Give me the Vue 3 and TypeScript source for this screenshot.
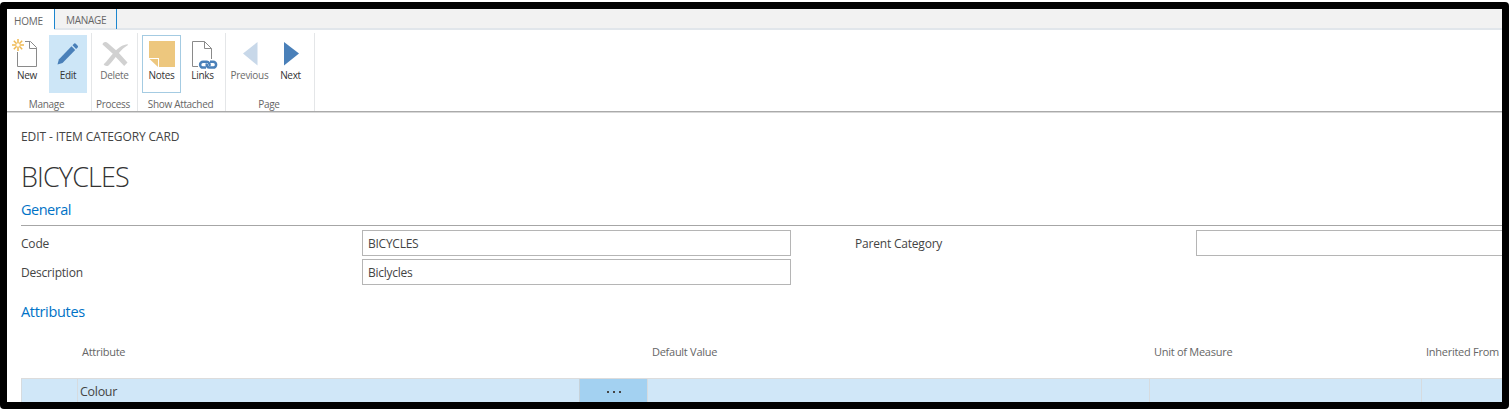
<script setup lang="ts">
interface Action { id: string; label: string; state?: string }
interface Group { name: string; cls: string; actions: Action[] }

const groups: Group[] = [
  { name: 'Manage', cls: 'g-manage', actions: [{ id: 'new', label: 'New' }, { id: 'edit', label: 'Edit', state: 'active' }] },
  { name: 'Process', cls: 'g-process', actions: [{ id: 'delete', label: 'Delete', state: 'disabled' }] },
  { name: 'Show Attached', cls: 'g-show', actions: [{ id: 'notes', label: 'Notes', state: 'outlined' }, { id: 'links', label: 'Links' }] },
  { name: 'Page', cls: 'g-page', actions: [{ id: 'previous', label: 'Previous', state: 'disabled' }, { id: 'next', label: 'Next' }] },
]
const headers: string[] = ['', 'Attribute', 'Default Value', 'Unit of Measure', 'Inherited From']
</script>

<template>
  <div class="frame">
    <div class="window">
      <nav class="tabs">
        <span class="tab home"><span>HOME</span></span>
        <span class="tab manage"><span>MANAGE</span></span>
      </nav>
      <div class="ribbon">
        <section v-for="g in groups" :key="g.name" class="group" :class="g.cls">
          <div class="actions">
            <button v-for="a in g.actions" :key="a.id" class="action" :class="[a.id, a.state]">
              <svg class="icon" width="38" height="34" viewBox="0 0 38 34">
                <g v-if="a.id === 'new'" fill="none">
                  <path d="M9.5 17V31.5H28.5V12.5L22.5 6.5H17" stroke="#8a8a8a" />
                  <path d="M21.5 6.5V13.5H28.5" stroke="#8a8a8a" />
                  <path d="M10 4V7.5M10 12.500V16M4 10H7.500M12.500 10H16M5.800 5.800L8.200 8.200M11.800 11.800L14.200 14.200M5.800 14.200L8.200 11.800M11.800 8.200L14.200 5.800" stroke="#efb952" stroke-width="1.5" />
                  <circle cx="10" cy="10" r="2.300" stroke="#efb952" stroke-width="1" />
                </g>
                <g v-else-if="a.id === 'edit'" fill="#4a80b9">
                  <path d="M8.500 29.500L9.800 24.500L22.500 11.300L26.200 15L13.500 27.900Z" />
                  <path d="M23.500 10.300L25.200 8.600Q26 8 26.800 8.800L28.700 10.700Q29.400 11.600 28.700 12.400L27.100 14Z" />
                </g>
                <g v-else-if="a.id === 'delete'" fill="#d1d1d1">
                  <path d="M6.500 9.500C6.800 7 9.800 6.200 12 8.200L20 15.300C23 12.500 27 9.500 31.700 9.200L32 10C28.500 12 25.500 14.800 22.900 18L31.500 27.500L28.200 31L19.700 22C17 25.500 14.800 28.500 12.500 30.500C10.500 31.600 8.500 30.800 7.700 29.300C10.800 26.500 13.600 22.500 16.800 18.800Z" />
                </g>
                <g v-else-if="a.id === 'notes'">
                  <path d="M6 6H32V32H16V23H6Z" fill="#edc77e" />
                  <path d="M6.500 24H15V32Z" fill="#edc77e" />
                </g>
                <g v-else-if="a.id === 'links'" fill="none">
                  <path d="M14 31.500H8.500V6.500H20.500L27.500 13.500V24" stroke="#8a8a8a" />
                  <path d="M20.500 6.500V13.500H27.500" stroke="#8a8a8a" />
                  <path d="M22 32.600H19A2.900 2.900 0 0 1 19 26.800H23A2.900 2.900 0 0 1 25.300 31" stroke="#4a80b9" stroke-width="2.500" />
                  <path d="M26 26.800H29.200A2.900 2.900 0 0 1 29.200 32.600H25.500A2.900 2.900 0 0 1 22.900 28.500" stroke="#4a80b9" stroke-width="2.500" />
                </g>
                <path v-else-if="a.id === 'previous'" d="M12 18.500L26.500 7V30.500Z" fill="#c8d8e9" />
                <path v-else d="M12 7L27 18.500L12 30.500Z" fill="#4a80b9" />
              </svg>
              <span class="caption">{{ a.label }}</span>
            </button>
          </div>
          <div class="group-name"><span>{{ g.name }}</span></div>
        </section>
      </div>

      <main class="page">
        <div class="crumb"><span>EDIT - ITEM CATEGORY CARD</span></div>
        <h1><span>BICYCLES</span></h1>
        <h2 class="general"><span>General</span></h2>
        <div class="fields">
          <label class="code">Code</label>
          <input value="BICYCLES" class="code-input" />
          <label class="parent"><span>Parent Category</span></label>
          <input value="" class="parent-input" />
          <label class="desc"><span>Description</span></label>
          <input value="Biclycles" class="desc-input" />
        </div>
        <h2 class="attributes"><span>Attributes</span></h2>
        <div class="grid head">
          <span v-for="(h, i) in headers" :key="i" :class="'h' + i">{{ h }}</span>
        </div>
        <div class="grid row">
          <span></span>
          <span class="value"><span class="colour">Colour</span><span class="lookup"><i></i><i></i><i></i></span></span>
          <span></span>
          <span></span>
          <span></span>
        </div>
      </main>
    </div>
  </div>
</template>

<style>
body { background: #fff; overflow: hidden; }
</style>

<style scoped>
* { box-sizing: border-box; }
.frame { width: 1509px; height: 407px; margin-top: 2px; padding: 7px; background: #000; border-radius: 4px; font-family: "Open Sans", "Noto Sans", sans-serif; color: #444; }
.window { width: 1495px; height: 393px; background: #fff; overflow: hidden; }
.tabs { display: flex; height: 21px; background: #f2f2f2; border-bottom: 2px solid #e1e6eb; }
.tab { display: flex; align-items: center; height: 20px; font-size: 10px; letter-spacing: -0.2px; color: #666; white-space: nowrap; }
.home { width: 47px; height: 21px; padding: 2px 0 0 7px; background: #fff; }
.manage.tab { width: 63px; padding: 2px 0 0 11px; border-left: 1px solid #1c86cf; border-right: 1px solid #1c86cf; letter-spacing: -0.3px; }
.ribbon { display: flex; height: 82px; padding-top: 3px; border-bottom: 1px solid #aaa; box-shadow: 0 1px #d8d8d8; }
.group { display: flex; flex-direction: column; border-right: 1px solid #e4e6e8; }
.g-manage { width: 85px; padding-left: 1px; }
.g-process { width: 46px; padding-left: 3px; }
.g-show { width: 88px; padding-left: 4px; }
.g-page { width: 89px; padding-left: 4px; }
.actions { display: flex; gap: 2px; height: 62px; padding-top: 2px; }
.g-manage .actions { gap: 3px; }
.action { display: flex; flex-direction: column; align-items: center; width: 39px; height: 58px; margin: 0; padding: 0; border: 0; background: transparent; font-family: inherit; color: #333; }
.g-manage .action { width: 38px; }
.icon { display: block; flex: none; }
.caption { font-size: 10px; line-height: 13px; letter-spacing: -0.3px; white-space: nowrap; }
.active { background: #cde6f7; }
.disabled { color: #6c6c6c; }
.outlined { box-shadow: inset 0 0 0 1px #a4cbe2; }
.group-name { display: flex; justify-content: center; padding: 4px 6px 0 0; font-size: 10px; line-height: 13px; letter-spacing: -0.32px; color: #666; white-space: nowrap; }
.page { padding-left: 14px; }
.crumb { height: 48px; padding-top: 16px; font-size: 12px; line-height: 17px; letter-spacing: -0.1px; white-space: nowrap; }
h1 { height: 38px; margin: 0; font-size: 27px; font-weight: 300; line-height: 33px; letter-spacing: -0.9px; color: #333; }
h2 { margin: 0; font-size: 14.500px; font-weight: 400; line-height: 20px; color: #0072c6; }
.general { height: 28px; padding-top: 2px; border-bottom: 1px solid #a6a6a6; letter-spacing: -0.5px; }
.fields { display: grid; grid-template-columns: 341px 429px 64px 341px 429px; grid-template-rows: 26px 26px; row-gap: 3px; padding-top: 4px; font-size: 12px; line-height: 28px; letter-spacing: -0.2px; }
.parent { grid-column: 4; }
.desc { grid-column: 1; }
input { width: 429px; height: 26px; padding: 1px 5px; border: 1px solid #b5b5b5; border-radius: 0; background: #fff; font: 12px "Open Sans", "Noto Sans", sans-serif; letter-spacing: -0.25px; color: #444; outline: 0; }
.attributes { height: 43px; padding-top: 17px; letter-spacing: -0.33px; }
.grid { display: grid; grid-template-columns: 56px 570px 502px 272px 1fr; white-space: nowrap; }
.head { height: 50px; padding-top: 14px; font-size: 11px; line-height: 19px; letter-spacing: -0.27px; color: #666; }
.head span { padding-left: 5px; }
.row { height: 30px; background: #d0e7f8; border-top: 1px solid #dcdcdc; }
.row > span { border-left: 1px solid #d6dbdf; }
.row > .value { display: flex; padding-left: 2px; font-size: 12.500px; line-height: 26px; letter-spacing: -0.3px; }
.colour { flex: 1; }
.lookup { display: flex; justify-content: center; gap: 4px; width: 68px; padding-top: 12px; background: #a3d1f1; border-left: 1px solid #c6d2da; }
.lookup i { width: 2px; height: 2px; background: #444; }
</style>
